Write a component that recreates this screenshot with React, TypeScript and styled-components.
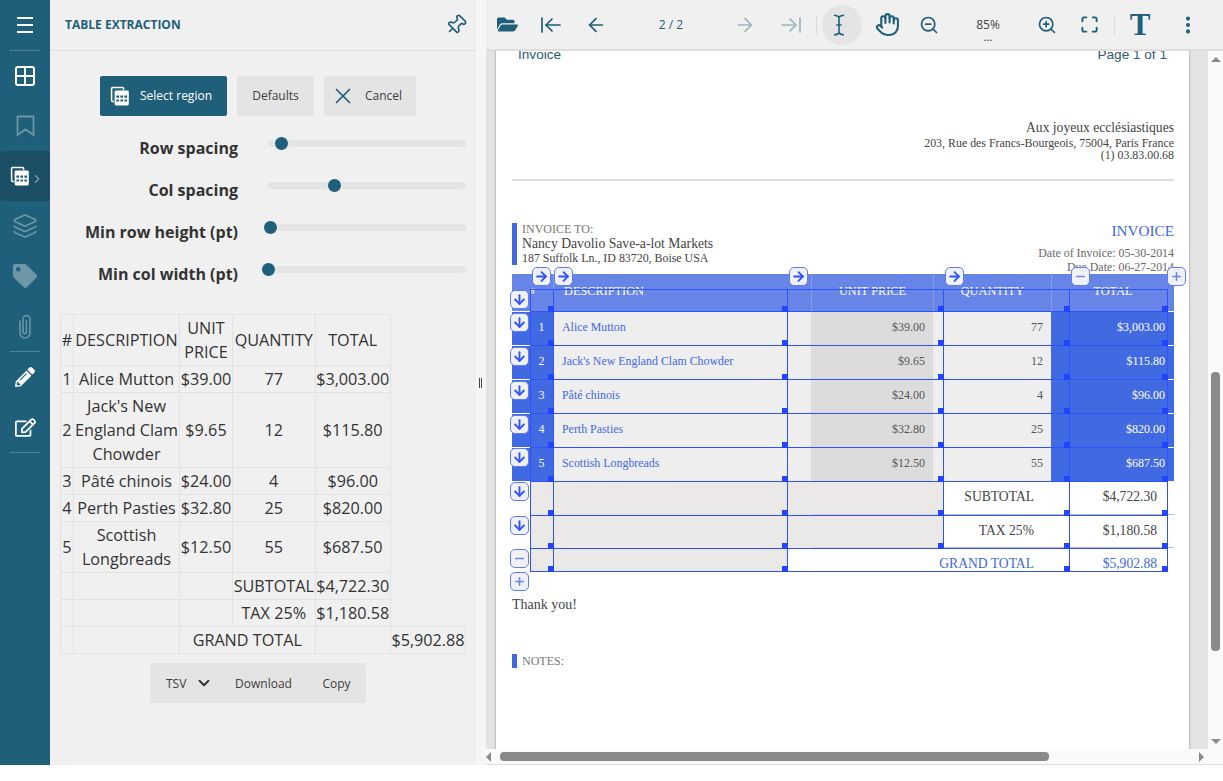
import styled, { createGlobalStyle } from "styled-components";
import {
	ArrowLeft,
	ArrowRight,
	ArrowDown,
	ArrowLeftToLine,
	ArrowRightToLine,
	ChevronDown,
	ChevronRight,
	EllipsisVertical,
	Grid2x2,
	Hand,
	Layers,
	Maximize,
	Menu,
	Minus,
	Pin,
	Plus,
	X,
	ZoomIn,
	ZoomOut,
} from "lucide-react";
import { FaFolderOpen, FaPencilAlt, FaRegEdit, FaTag } from "react-icons/fa";

const teal = "#1f5f79";
const royal = "#4169e1";
const line = "#2f52ff";

const GlobalStyle = createGlobalStyle`
	html, body {
		margin: 0;
		background: #fff;
	}
	* {
		box-sizing: border-box;
	}
`;

const TableStackIcon = ({ size = 20 }: { size?: number }) => (
	<svg width={size} height={size} viewBox="0 0 20 20" fill="none">
		<path d="M4 15.5H2.6a1 1 0 0 1-1-1V2.6a1 1 0 0 1 1-1h10a1 1 0 0 1 1 1V4" stroke="currentColor" strokeWidth="1.5" />
		<path d="M6 4.6h11.4a1.4 1.4 0 0 1 1.4 1.4v12a1.4 1.4 0 0 1-1.4 1.4H6a1.4 1.4 0 0 1-1.4-1.4V6A1.4 1.4 0 0 1 6 4.6z" fill="currentColor" />
		<path d="M6.4 9.6h2.6v2.2H6.4zM10.4 9.6h2.6v2.2h-2.6zM14.4 9.6H17v2.2h-2.6zM6.4 13.4h2.6v2.2H6.4zM10.4 13.4h2.6v2.2h-2.6zM14.4 13.4H17v2.2h-2.6z" fill={teal} />
	</svg>
);

const BookmarkIcon = () => (
	<svg width="19" height="22" viewBox="0 0 19 22" fill="none" stroke="currentColor" strokeWidth="1.8">
		<path d="M1.5 1.5h16v18.5l-8-5.6-8 5.6z" />
	</svg>
);

const ClipIcon = () => (
	<svg width="14" height="25" viewBox="0 0 14 25" fill="none" stroke="currentColor" strokeWidth="1.5" strokeLinecap="round">
		<path d="M2 7v12a5 5 0 0 0 10 0V5a3.5 3.5 0 0 0-7 0v13a1.7 1.7 0 0 0 3.4 0V7" />
	</svg>
);

const IBeamIcon = () => (
	<svg width="12" height="22" viewBox="0 0 12 22" fill="none" stroke="currentColor" strokeWidth="1.6">
		<path d="M1 1.2c2 0 4 .5 5 2.2 1-1.7 3-2.2 5-2.2M6 3.4v15.2M1 20.8c2 0 4-.5 5-2.2 1 1.7 3 2.2 5 2.2M3.4 11h5.2" />
	</svg>
);

const sideTop = [
	{ icon: <Grid2x2 size={24} strokeWidth={2} />, faded: false },
	{ icon: <BookmarkIcon />, faded: true },
];
const sideBottom = [
	{ icon: <Layers size={26} strokeWidth={1.5} />, faded: true },
	{ icon: <FaTag size={24} />, faded: true },
	{ icon: <ClipIcon />, faded: true },
];

const sliders = [
	{ label: "Row spacing", at: 13 },
	{ label: "Col spacing", at: 66 },
	{ label: "Min row height (pt)", at: 2 },
	{ label: "Min col width (pt)", at: 0 },
];

const invoiceRows = [
	{ n: "1", name: "Alice Mutton", price: "$39.00", qty: "77", total: "$3,003.00" },
	{ n: "2", name: "Jack's New England Clam Chowder", price: "$9.65", qty: "12", total: "$115.80" },
	{ n: "3", name: "Pâté chinois", price: "$24.00", qty: "4", total: "$96.00" },
	{ n: "4", name: "Perth Pasties", price: "$32.80", qty: "25", total: "$820.00" },
	{ n: "5", name: "Scottish Longbreads", price: "$12.50", qty: "55", total: "$687.50" },
];

// detected grid on top of the pdf page
const overlayRows = [
	[1, 1, 1, 1, 1],
	[1, 1, 1, 1, 1],
	[1, 1, 1, 1, 1],
	[1, 1, 1, 1, 1],
	[1, 1, 1, 1, 1],
	[1, 1, 1, 1, 1],
	[2, 2, 2, 1, 1],
	[2, 2, 2, 1, 1],
];

const colButtons = [
	{ x: 19.5, kind: "right" },
	{ x: 42, kind: "right" },
	{ x: 276.5, kind: "right" },
	{ x: 433, kind: "right" },
	{ x: 558.5, kind: "minus" },
	{ x: 654.5, kind: "plus" },
];
const rowButtons = [
	{ y: 15.5, kind: "down" },
	{ y: 38.7, kind: "down" },
	{ y: 72.7, kind: "down" },
	{ y: 106.7, kind: "down" },
	{ y: 140.7, kind: "down" },
	{ y: 174.3, kind: "down" },
	{ y: 208, kind: "down" },
	{ y: 242.3, kind: "down" },
	{ y: 275.3, kind: "minus" },
	{ y: 298.3, kind: "plus" },
];

const EditIcon = ({ kind }: { kind: string }) => {
	if (kind === "right") return <ArrowRight size={15} strokeWidth={3} />;
	if (kind === "down") return <ArrowDown size={15} strokeWidth={3} />;
	if (kind === "minus") return <Minus size={13} strokeWidth={3} color="#6f86e6" />;
	return <Plus size={13} strokeWidth={3} color="#6f86e6" />;
};

export default function App() {
	return (
		<>
			<GlobalStyle />
			<Shell>
				<Sidebar>
					<SideItem>
						<Menu size={24} strokeWidth={2} strokeLinecap="butt" />
					</SideItem>
					<SideDivider />
					{sideTop.map((item, i) => (
						<SideItem key={i} $faded={item.faded}>
							{item.icon}
						</SideItem>
					))}
					<SideItem $active>
						<TableStackIcon />
						<SideChevron>
							<ChevronRight size={14} />
						</SideChevron>
					</SideItem>
					{sideBottom.map((item, i) => (
						<SideItem key={i} $faded={item.faded}>
							{item.icon}
						</SideItem>
					))}
					<SideDivider />
					<SideItem>
						<FaPencilAlt size={20} />
					</SideItem>
					<SideItem>
						<FaRegEdit size={21} />
					</SideItem>
					<SideDivider />
				</Sidebar>

				<Panel>
					<PanelHeader>
						<PanelTitle>TABLE EXTRACTION</PanelTitle>
						<PinIcon>
							<Pin size={22} strokeWidth={1.8} />
						</PinIcon>
					</PanelHeader>
					<PanelBody>
						<ActionRow>
							<ActionButton $primary $w={127}>
								<TableStackIcon />
								Select region
							</ActionButton>
							<ActionButton $w={77} $center>
								Defaults
							</ActionButton>
							<ActionButton $w={92}>
								<CancelIcon>
									<X size={26} strokeWidth={1.6} />
								</CancelIcon>
								Cancel
							</ActionButton>
						</ActionRow>
						{sliders.map((s) => (
							<SliderRow key={s.label}>
								<SliderLabel>{s.label}</SliderLabel>
								<SliderTrack>
									<SliderThumb style={{ left: s.at }} />
								</SliderTrack>
							</SliderRow>
						))}
						<ResultTable>
							<colgroup>
								<col width={13} />
								<col width={106} />
								<col width={53} />
								<col width={82.5} />
								<col width={75.5} />
								<col width={75} />
							</colgroup>
							<tbody>
								<tr>
									<td>#</td>
									<td>DESCRIPTION</td>
									<td>UNIT PRICE</td>
									<td>QUANTITY</td>
									<td>TOTAL</td>
								</tr>
								{invoiceRows.map((r) => (
									<tr key={r.n}>
										<td>{r.n}</td>
										<td>{r.name}</td>
										<td>{r.price}</td>
										<td>{r.qty}</td>
										<td>{r.total}</td>
									</tr>
								))}
								<tr>
									<td />
									<td />
									<td />
									<td>SUBTOTAL</td>
									<td>$4,722.30</td>
								</tr>
								<tr>
									<td />
									<td />
									<td />
									<td>TAX 25%</td>
									<td>$1,180.58</td>
								</tr>
								<tr>
									<td />
									<td />
									<td colSpan={2}>GRAND TOTAL</td>
									<td />
									<td>$5,902.88</td>
								</tr>
							</tbody>
						</ResultTable>
						<ExportGroup>
							<ExportFormat>
								TSV
								<ChevronDown size={18} strokeWidth={2.6} color="#333" />
							</ExportFormat>
							<ExportButton $w={87}>Download</ExportButton>
							<ExportButton $w={59}>Copy</ExportButton>
						</ExportGroup>
					</PanelBody>
				</Panel>

				<Splitter>
					<Grip />
				</Splitter>

				<Viewer>
					<Toolbar>
						<ToolSlot $w={42}>
							<FaFolderOpen size={21} />
						</ToolSlot>
						<ToolSlot $w={46}>
							<ArrowLeftToLine size={24} strokeWidth={1.7} />
						</ToolSlot>
						<ToolSlot $w={44}>
							<ArrowLeft size={22} strokeWidth={1.9} />
						</ToolSlot>
						<PageCount>2 / 2</PageCount>
						<ToolSlot $w={42} $off>
							<ArrowRight size={22} strokeWidth={1.9} />
						</ToolSlot>
						<ToolSlot $w={50} $off>
							<ArrowRightToLine size={24} strokeWidth={1.7} />
						</ToolSlot>
						<ToolSep />
						<ActiveTool>
							<IBeamIcon />
						</ActiveTool>
						<ToolSlot $w={50}>
							<Hand size={25} strokeWidth={2} />
						</ToolSlot>
						<ToolSlot $w={34}>
							<ZoomOut size={20} strokeWidth={2} />
						</ToolSlot>
						<ZoomValue>
							<span>85%</span>
							<ZoomDots>...</ZoomDots>
						</ZoomValue>
						<ToolSlot $w={34}>
							<ZoomIn size={20} strokeWidth={2} />
						</ToolSlot>
						<ToolSlot $w={50}>
							<Maximize size={19} strokeWidth={2.4} />
						</ToolSlot>
						<ToolSep />
						<ToolSlot $w={50}>
							<BigT>T</BigT>
						</ToolSlot>
						<ToolSlot $w={46}>
							<EllipsisVertical size={22} strokeWidth={2.6} />
						</ToolSlot>
					</Toolbar>

					<ViewerMiddle>
						<DocArea>
							<PageSheet>
								<PageHead>
									<span>Invoice</span>
									<span>Page 1 of 1</span>
								</PageHead>
								<Company>
									<CompanyName>Aux joyeux ecclésiastiques</CompanyName>
									<CompanyLine>203, Rue des Francs-Bourgeois, 75004, Paris France</CompanyLine>
									<CompanyLine>(1) 03.83.00.68</CompanyLine>
								</Company>
								<Rule />
								<BillBlock>
									<BillTo>
										<Muted>INVOICE TO:</Muted>
										<BillName>Nancy Davolio Save-a-lot Markets</BillName>
										<CompanyLine>187 Suffolk Ln., ID 83720, Boise USA</CompanyLine>
									</BillTo>
									<BillDates>
										<InvoiceWord>INVOICE</InvoiceWord>
										<DateLine>Date of Invoice: 05-30-2014</DateLine>
										<DateLine>Due Date: 06-27-2014</DateLine>
									</BillDates>
								</BillBlock>

								<TableArea>
									<InvoiceHead>
										<HeadCell>#</HeadCell>
										<HeadCell $left>DESCRIPTION</HeadCell>
										<HeadCell>UNIT PRICE</HeadCell>
										<HeadCell>QUANTITY</HeadCell>
										<HeadCell>TOTAL</HeadCell>
									</InvoiceHead>
									{invoiceRows.map((r) => (
										<InvoiceRow key={r.n}>
											<NumCell>{r.n}</NumCell>
											<NameCell>{r.name}</NameCell>
											<PriceCell>{r.price}</PriceCell>
											<QtyCell>{r.qty}</QtyCell>
											<TotalCell>{r.total}</TotalCell>
										</InvoiceRow>
									))}
									<SumRow $h={34}>
										<SumLabel>SUBTOTAL</SumLabel>
										<SumValue>$4,722.30</SumValue>
									</SumRow>
									<SumRow $h={33}>
										<SumLabel>TAX 25%</SumLabel>
										<SumValue>$1,180.58</SumValue>
									</SumRow>
									<SumRow $h={23} $grand>
										<SumLabel>GRAND TOTAL</SumLabel>
										<SumValue>$5,902.88</SumValue>
									</SumRow>

									<GridOverlay>
										{overlayRows.map((row, i) =>
											row.map((kind, j) => (
												<OverlayCell key={`${i}-${j}`} $empty={kind === 2} />
											)),
										)}
										<OverlayCell $empty />
										<OverlayCell $empty />
										<OverlayCell $span={2} />
										<OverlayCell />
									</GridOverlay>
									{colButtons.map((b) => (
										<EdgeButton key={b.x} $x={b.x} $y={-7}>
											<EditIcon kind={b.kind} />
										</EdgeButton>
									))}
									{rowButtons.map((b) => (
										<EdgeButton key={b.y} $x={-2.5} $y={b.y}>
											<EditIcon kind={b.kind} />
										</EdgeButton>
									))}
								</TableArea>

								<Thanks>Thank you!</Thanks>
								<Notes>
									<NotesBar />
									<Muted>NOTES:</Muted>
								</Notes>
							</PageSheet>
						</DocArea>
						<VScroll>
							<ArrowUpTri />
							<VTrack>
								<VThumb />
							</VTrack>
							<ArrowDownTri />
						</VScroll>
					</ViewerMiddle>

					<HScroll>
						<ArrowLeftTri />
						<HTrack>
							<HThumb />
						</HTrack>
						<ArrowRightTri />
					</HScroll>
				</Viewer>
			</Shell>
		</>
	);
}

const Shell = styled.div`
	display: flex;
	height: 765px;
	overflow: hidden;
	font-family: "Open Sans", sans-serif;
	color: #333;
`;

const Sidebar = styled.nav`
	width: 50px;
	flex: none;
	background: ${teal};
	display: flex;
	flex-direction: column;
`;

const SideItem = styled.div<{ $faded?: boolean; $active?: boolean }>`
	position: relative;
	height: 50px;
	flex: none;
	display: flex;
	align-items: center;
	justify-content: center;
	color: ${(p) => (p.$faded ? "rgba(255,255,255,0.35)" : "#fff")};
	background: ${(p) => (p.$active ? "#1b4f66" : "transparent")};
	border-radius: ${(p) => (p.$active ? "3px" : "0")};
	${(p) => (p.$active ? "padding-right: 10px;" : "")}
`;

const SideChevron = styled.span`
	position: absolute;
	left: 30px;
	top: 18px;
	color: rgba(255, 255, 255, 0.45);
`;

const SideDivider = styled.div`
	height: 1px;
	flex: none;
	margin: 0 10px;
	background: rgba(255, 255, 255, 0.22);
`;

const Panel = styled.aside`
	width: 426px;
	flex: none;
	background: #f0f0f0;
	display: flex;
	flex-direction: column;
`;

const PanelHeader = styled.header`
	height: 51px;
	flex: none;
	border-bottom: 1px solid #dcdcdc;
	display: flex;
	align-items: center;
	justify-content: space-between;
	padding: 0 9px 1px 15px;
`;

const PanelTitle = styled.h2`
	margin: 0;
	font-size: 12px;
	font-weight: 700;
	color: ${teal};
`;

const PinIcon = styled.span`
	display: flex;
	color: ${teal};
	transform: rotate(45deg);
`;

const PanelBody = styled.div`
	padding: 25px 10px 0;
`;

const ActionRow = styled.div`
	display: flex;
	gap: 10px;
	padding-left: 40px;
	margin-bottom: 11px;
`;

const ActionButton = styled.button<{ $primary?: boolean; $w: number; $center?: boolean }>`
	width: ${(p) => p.$w}px;
	height: 40px;
	border: none;
	border-radius: 2px;
	padding: 0 10px 1px;
	display: flex;
	align-items: center;
	justify-content: ${(p) => (p.$center ? "center" : "flex-start")};
	gap: 10px;
	font-family: inherit;
	font-size: 12px;
	background: ${(p) => (p.$primary ? teal : "#e4e4e4")};
	color: ${(p) => (p.$primary ? "#fff" : "#3d3d3d")};
`;

const CancelIcon = styled.span`
	display: flex;
	margin: 0 -1px 0 -4px;
	color: ${teal};
`;

const SliderRow = styled.div`
	height: 42px;
	display: flex;
	align-items: center;
`;

const SliderLabel = styled.label`
	width: 178px;
	flex: none;
	text-align: right;
	font-size: 16px;
	font-weight: 700;
	line-height: 24px;
`;

const SliderTrack = styled.div`
	position: relative;
	width: 198px;
	height: 7px;
	margin: 0 0 9px 30px;
	background: #e4e4e4;
	border-radius: 3px;
`;

const SliderThumb = styled.span`
	position: absolute;
	top: 50%;
	width: 15px;
	height: 15px;
	margin: -7.5px 0 0 -7.5px;
	border-radius: 50%;
	background: ${teal};
	border: 1.5px solid #fff;
`;

const ResultTable = styled.table`
	width: 405px;
	margin-top: 19px;
	table-layout: fixed;
	border-collapse: collapse;
	font-size: 16.2px;
	line-height: 24px;
	text-align: center;

	td {
		padding: 1px 0;
		border: 1px solid #e2e2e2;
	}
`;

const ExportGroup = styled.div`
	display: flex;
	width: 216px;
	height: 40px;
	margin: 9px 0 0 90px;
	background: #e4e4e4;
	border-radius: 2px;
	font-size: 12px;
	color: #3d3d3d;
`;

const ExportFormat = styled.div`
	width: 70px;
	flex: none;
	display: flex;
	align-items: center;
	justify-content: space-between;
	padding: 0 7px 0 16px;
`;

const ExportButton = styled.div<{ $w: number }>`
	width: ${(p) => p.$w}px;
	flex: none;
	display: flex;
	align-items: center;
	justify-content: center;
`;

const Splitter = styled.div`
	width: 10px;
	flex: none;
	background: #f6f6f6;
	display: flex;
	align-items: center;
	justify-content: center;
`;

const Grip = styled.span`
	width: 3px;
	height: 10px;
	margin: 0 1px 0 0;
	border-left: 1px solid #444;
	border-right: 1px solid #444;
`;

const Viewer = styled.main`
	flex: 1;
	min-width: 0;
	display: flex;
	flex-direction: column;
`;

const Toolbar = styled.div`
	height: 51px;
	flex: none;
	display: flex;
	align-items: center;
	position: relative;
	z-index: 2;
	background: #f0f0f0;
	border-bottom: 2px solid #dedede;
	color: ${teal};
`;

const ToolSlot = styled.div<{ $w: number; $off?: boolean }>`
	width: ${(p) => p.$w}px;
	flex: none;
	display: flex;
	align-items: center;
	justify-content: center;
	opacity: ${(p) => (p.$off ? 0.4 : 1)};
`;

const PageCount = styled.div`
	width: 106px;
	flex: none;
	text-align: center;
	font-size: 12px;
`;

const ToolSep = styled.div`
	width: 1px;
	height: 20px;
	flex: none;
	background: #d8d8d8;
`;

const ActiveTool = styled.div`
	width: 40px;
	height: 40px;
	flex: none;
	margin-left: 5px;
	padding-right: 6px;
	border-radius: 50%;
	background: #e4e4e4;
	display: flex;
	align-items: center;
	justify-content: center;
`;

const ZoomValue = styled.div`
	width: 84px;
	flex: none;
	display: flex;
	flex-direction: column;
	align-items: center;
	margin-top: 10px;
	font-size: 12px;
	line-height: 16px;
	color: #444;
`;

const ZoomDots = styled.span`
	font-size: 9px;
	line-height: 10px;
	font-weight: 700;
	letter-spacing: 0.5px;
`;

const BigT = styled.span`
	font-family: "Liberation Serif", serif;
	font-weight: 700;
	font-size: 31px;
	line-height: 33px;
`;

const ViewerMiddle = styled.div`
	flex: 1;
	min-height: 0;
	display: flex;
`;

const DocArea = styled.div`
	flex: 1;
	min-width: 0;
	background: #e3e3e3;
	padding: 0 19px 0 10px;
	overflow: hidden;
`;

const PageSheet = styled.div`
	width: 693px;
	height: 800px;
	background: #fff;
	box-shadow: 0 0 2px rgba(0, 0, 0, 0.45);
	padding: 0 15px 0 16px;
	font-family: "Liberation Serif", serif;
	color: #444;
`;

const PageHead = styled.div`
	display: flex;
	justify-content: space-between;
	margin-top: -4px;
	padding: 0 7px 0 6px;
	height: 16px;
	font-family: "Liberation Sans", sans-serif;
	font-size: 13.6px;
	line-height: 16px;
	color: #2f5a72;
`;

const Company = styled.div`
	margin-top: 57px;
	text-align: right;
`;

const CompanyName = styled.div`
	font-size: 13.6px;
	line-height: 16px;
	margin-bottom: 1px;
`;

const CompanyLine = styled.div`
	font-size: 11.9px;
	line-height: 12px;
`;

const Rule = styled.div`
	height: 2px;
	margin-top: 18px;
	background: #ddd;
`;

const BillBlock = styled.div`
	display: flex;
	justify-content: space-between;
	margin-top: 42px;
	height: 51px;
`;

const BillTo = styled.div`
	height: 42px;
	border-left: 5px solid ${royal};
	padding-left: 5px;
`;

const Muted = styled.div`
	font-size: 12px;
	line-height: 13px;
	color: #777;
`;

const BillName = styled.div`
	font-size: 13.7px;
	line-height: 16px;
`;

const BillDates = styled.div`
	text-align: right;
`;

const InvoiceWord = styled.div`
	font-size: 15.2px;
	line-height: 16px;
	color: ${royal};
	margin-bottom: 7px;
`;

const DateLine = styled.div`
	font-size: 11.9px;
	line-height: 14px;
	color: #666;
`;

const TableArea = styled.div`
	position: relative;
`;

const columns = "41px 258px 122px 118px 123px";

const InvoiceHead = styled.div`
	display: grid;
	grid-template-columns: ${columns};
	height: 37px;
	background: #6685e6;
	color: #fff;
	font-size: 12.3px;
`;

const HeadCell = styled.div<{ $left?: boolean }>`
	display: flex;
	align-items: center;
	justify-content: ${(p) => (p.$left ? "flex-start" : "center")};
	padding: ${(p) => (p.$left ? "0 0 2px 10px" : "0 0 2px")};
	border-left: 1px solid rgba(255, 255, 255, 0.2);

	&:first-child {
		border-left: none;
		padding: 0 0 3px;
		font-size: 9px;
	}
`;

const InvoiceRow = styled.div`
	display: grid;
	grid-template-columns: ${columns};
	height: 34px;
	font-size: 12px;
	line-height: 30px;
	border-top: 1px solid rgba(255, 255, 255, 0.5);
`;

const NumCell = styled.div`
	background: ${royal};
	color: #fff;
	text-align: center;
	padding-left: 18px;
`;

const NameCell = styled.div`
	background: #eee;
	color: ${royal};
	padding-left: 9px;
	font-size: 11.9px;
`;

const PriceCell = styled.div`
	background: #dcdcdc;
	text-align: right;
	padding-right: 8px;
	color: #555;
`;

const QtyCell = styled.div`
	background: #eee;
	text-align: right;
	padding-right: 8px;
	color: #555;
`;

const TotalCell = styled.div`
	background: ${royal};
	color: #fff;
	text-align: right;
	padding-right: 9px;
`;

const SumRow = styled.div<{ $h: number; $grand?: boolean }>`
	height: ${(p) => p.$h}px;
	margin-left: 299px;
	display: flex;
	justify-content: flex-end;
	padding: ${(p) => (p.$grand ? "4px 17px 0 0" : "0 17px 0 0")};
	font-size: 13.6px;
	line-height: ${(p) => (p.$grand ? "23px" : "32px")};
	color: ${(p) => (p.$grand ? royal : "#444")};
	border-bottom: ${(p) => (p.$grand ? "none" : "1px solid #bbb")};
`;

const SumLabel = styled.div``;

const SumValue = styled.div`
	width: 123px;
	text-align: right;
`;

const GridOverlay = styled.div`
	position: absolute;
	left: 18px;
	top: 15px;
	display: grid;
	grid-template-columns: 23px 234px 156px 126px 98px;
	grid-template-rows: 22px repeat(6, 34px) 33px 23px;
	border-top: 1px solid ${line};
	border-left: 1px solid ${line};
`;

const OverlayCell = styled.div<{ $empty?: boolean; $span?: number }>`
	position: relative;
	${(p) => (p.$span ? `grid-column: span ${p.$span};` : "")}
	border-right: 1px solid ${line};
	border-bottom: 1px solid ${line};
	background: ${(p) => (p.$empty ? "rgba(228, 225, 223, 0.74)" : "transparent")};

	&::after {
		content: "";
		position: absolute;
		right: -1px;
		bottom: -1px;
		width: 6px;
		height: 6px;
		background: #2244ff;
	}
`;

const EdgeButton = styled.div<{ $x: number; $y: number }>`
	position: absolute;
	left: ${(p) => p.$x}px;
	top: ${(p) => p.$y}px;
	width: 19px;
	height: 19px;
	border: 1.5px solid #5f7cf0;
	border-radius: 5px;
	background: #f0f1f8;
	color: ${line};
	display: flex;
	align-items: center;
	justify-content: center;
`;

const Thanks = styled.div`
	margin-top: 26px;
	font-size: 14px;
	line-height: 16px;
`;

const Notes = styled.div`
	display: flex;
	align-items: center;
	gap: 5px;
	margin-top: 41px;
`;

const NotesBar = styled.span`
	width: 5px;
	height: 14px;
	background: ${royal};
`;

const VScroll = styled.div`
	width: 15px;
	flex: none;
	background: #fafafa;
	display: flex;
	flex-direction: column;
	align-items: center;
`;

const VTrack = styled.div`
	flex: 1;
	min-height: 0;
`;

const VThumb = styled.div`
	width: 9px;
	height: 279px;
	margin-top: 305px;
	border-radius: 4px;
	background: #8a8a8a;
`;

const ArrowUpTri = styled.span`
	margin: 6px 0 5px;
	border-left: 5px solid transparent;
	border-right: 5px solid transparent;
	border-bottom: 5px solid #8a8a8a;
`;

const ArrowDownTri = styled.span`
	margin: 5px 0 5px;
	border-left: 5px solid transparent;
	border-right: 5px solid transparent;
	border-top: 5px solid #8a8a8a;
`;

const HScroll = styled.div`
	height: 16px;
	flex: none;
	background: #fafafa;
	border-bottom: 1px solid #ddd;
	display: flex;
	align-items: center;
	padding: 0 19px 0 0;
`;

const HTrack = styled.div`
	flex: 1;
	min-width: 0;
`;

const HThumb = styled.div`
	width: 549px;
	height: 9px;
	margin-left: 9px;
	border-radius: 4px;
	background: #8a8a8a;
`;

const ArrowLeftTri = styled.span`
	margin-left: 0;
	border-top: 5px solid transparent;
	border-bottom: 5px solid transparent;
	border-right: 5px solid #8a8a8a;
`;

const ArrowRightTri = styled.span`
	border-top: 5px solid transparent;
	border-bottom: 5px solid transparent;
	border-left: 5px solid #8a8a8a;
`;
